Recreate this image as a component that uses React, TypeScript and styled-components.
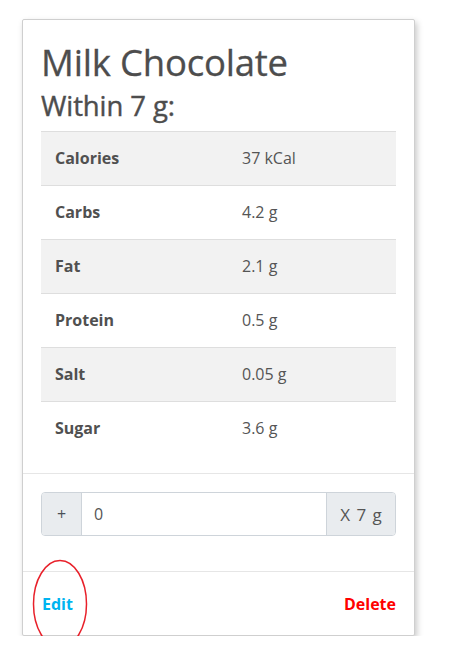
import React, { useState } from "react";
import styled, { createGlobalStyle } from "styled-components";

const GlobalStyle = createGlobalStyle`
  body {
    margin: 0;
    background: #fff;
    font-family: "Open Sans", "Noto Sans", sans-serif;
    color: #505050;
  }
`;

const nutrients = [
  { name: "Calories", value: "37 kCal" },
  { name: "Carbs", value: "4.2 g" },
  { name: "Fat", value: "2.1 g" },
  { name: "Protein", value: "0.5 g" },
  { name: "Salt", value: "0.05 g" },
  { name: "Sugar", value: "3.6 g" },
];

const App = () => {
  const [amount, setAmount] = useState("0");
  const onChange = (e: React.FormEvent<HTMLInputElement>) => {
    setAmount(e.currentTarget.value);
  };
  return (
    <Page>
      <GlobalStyle />
      <Card>
        <Body>
          <Title>Milk Chocolate</Title>
          <Subtitle>Within 7 g:</Subtitle>
          <Table>
            <tbody>
              {nutrients.map((n, i) => (
                <Row key={n.name} striped={i % 2 === 0}>
                  <Label>{n.name}</Label>
                  <Value>{n.value}</Value>
                </Row>
              ))}
            </tbody>
          </Table>
        </Body>
        <InputSection>
          <InputGroup>
            <AddBtn>+</AddBtn>
            <AmountInput type="text" value={amount} onChange={onChange} />
            <Addon>X 7 g</Addon>
          </InputGroup>
        </InputSection>
        <Footer>
          <ActionLink color="#00b4f0">Edit</ActionLink>
          <ActionLink color="#ff0000">Delete</ActionLink>
          <Circle width="58" height="90" viewBox="0 0 58 90">
            <ellipse cx="29" cy="45" rx="26.5" ry="43.5" fill="none" stroke="#e8202a" strokeWidth="1.5" />
          </Circle>
        </Footer>
      </Card>
    </Page>
  );
};

export default App;

const Page = styled.div`
  padding: 19px 0 0 22px;
`;
const Card = styled.div`
  width: 391px;
  border: 1px solid #cfcfcf;
  border-radius: 2px;
  background: #fff;
  box-shadow: 2px 3px 6px rgba(0, 0, 0, 0.22);
`;
const Body = styled.div`
  padding: 18px;
  border-bottom: 1px solid #e6e6e6;
`;
const Title = styled.h1`
  margin: 0;
  font-size: 36.5px;
  font-weight: 500;
  line-height: 48px;
  color: #4d4d4d;
  letter-spacing: -0.2px;
  -webkit-text-stroke: 0.3px #4d4d4d;
`;
const Subtitle = styled.h3`
  margin: 3px 0 0;
  font-size: 27.5px;
  font-weight: 500;
  line-height: 34px;
  color: #4d4d4d;
  letter-spacing: -0.1px;
  -webkit-text-stroke: 0.4px #4d4d4d;
`;
const Table = styled.table`
  width: 100%;
  margin-top: 8px;
  border-collapse: collapse;
  font-size: 16px;
`;
const Row = styled.tr<{ striped: boolean }>`
  background: ${(p) => (p.striped ? "#f2f2f2" : "#fff")};
  border-top: 1px solid #dedede;
`;
const Label = styled.td`
  width: 173px;
  padding: 14px 0 15px 14px;
  font-weight: 700;
  line-height: 24px;
  color: #505050;
`;
const Value = styled.td`
  padding: 14px 14px 15px;
  line-height: 24px;
  color: #555;
`;
const InputSection = styled.div`
  padding: 18px 18px 35px;
  border-bottom: 1px solid #e6e6e6;
`;
const InputGroup = styled.div`
  display: flex;
  height: 42px;
  border: 1px solid #ced4da;
  border-radius: 4px;
  overflow: hidden;
  font-size: 16px;
  color: #555;
`;
const AddBtn = styled.button`
  width: 40px;
  flex-shrink: 0;
  border: none;
  border-right: 1px solid #ced4da;
  background: #e9ecef;
  color: #495057;
  font-family: inherit;
  font-size: 16px;
  padding: 0;
`;
const AmountInput = styled.input`
  flex: 1;
  min-width: 0;
  border: none;
  outline: none;
  padding: 0 12px;
  font-family: inherit;
  font-size: 16px;
  color: #555;
`;
const Addon = styled.div`
  box-sizing: border-box;
  width: 69px;
  flex-shrink: 0;
  display: flex;
  align-items: center;
  justify-content: center;
  border-left: 1px solid #ced4da;
  background: #e9ecef;
  color: #555;
  font-size: 17px;
  letter-spacing: 1px;
  padding-left: 1px;
`;
const Footer = styled.div`
  position: relative;
  display: flex;
  justify-content: space-between;
  align-items: center;
  height: 63px;
  padding: 0 18px 0 19px;
`;
const ActionLink = styled.a<{ color: string }>`
  color: ${(p) => p.color};
  font-weight: 700;
  font-size: 16px;
  cursor: pointer;
`;
const Circle = styled.svg`
  position: absolute;
  left: 8px;
  top: -13px;
  pointer-events: none;
`;
